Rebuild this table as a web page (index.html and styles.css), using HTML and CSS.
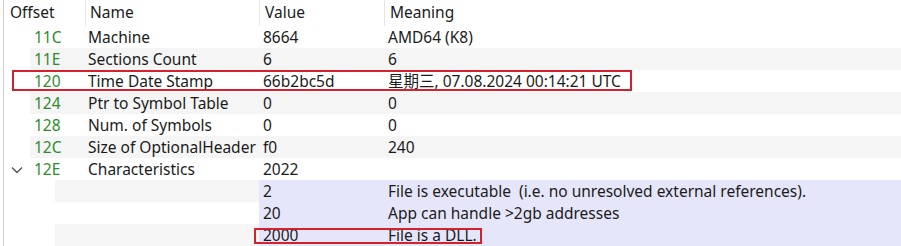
FILE: index.html
```html
<!DOCTYPE html>
<html>
<head>
<meta charset="utf-8">
<link rel="stylesheet" href="styles.css">
</head>
<body>
<div class="tree">
  <div class="head">
    <div class="hcell h-off">Offset</div>
    <div class="hcell h-name">Name</div>
    <div class="hcell h-val">Value</div>
    <div class="hcell h-mean">Meaning</div>
  </div>
  <div class="row l1"><div class="gutter"></div><div class="cells"><span class="off">11C</span><span>Machine</span><span>8664</span><span>AMD64 (K8)</span></div></div>
  <div class="row l1 alt"><div class="gutter"></div><div class="cells"><span class="off">11E</span><span>Sections Count</span><span>6</span><span>6</span></div></div>
  <div class="row l1"><div class="gutter"></div><div class="cells"><span class="off">120</span><span>Time Date Stamp</span><span>66b2bc5d</span><span>星期三, 07.08.2024 00:14:21 UTC</span></div></div>
  <div class="row l1 alt"><div class="gutter"></div><div class="cells"><span class="off">124</span><span>Ptr to Symbol Table</span><span>0</span><span>0</span></div></div>
  <div class="row l1"><div class="gutter"></div><div class="cells"><span class="off">128</span><span>Num. of Symbols</span><span>0</span><span>0</span></div></div>
  <div class="row l1 alt"><div class="gutter"></div><div class="cells"><span class="off">12C</span><span>Size of OptionalHeader</span><span>f0</span><span>240</span></div></div>
  <div class="row l1"><div class="gutter"><svg class="chev" width="12" height="8" viewBox="0 0 12 8"><polyline points="1,1.5 6,6.5 11,1.5" fill="none" stroke="#555" stroke-width="1.4"/></svg></div><div class="cells"><span class="off">12E</span><span>Characteristics</span><span>2022</span><span></span></div></div>
  <div class="row l2 alt"><div class="gutter"></div><div class="cells"><span class="off"></span><span></span><span class="flag">2</span><span class="flag">File is executable  (i.e. no unresolved external references).</span></div></div>
  <div class="row l2"><div class="gutter"></div><div class="cells"><span class="off"></span><span></span><span class="flag">20</span><span class="flag">App can handle &gt;2gb addresses</span></div></div>
  <div class="row l2 alt"><div class="gutter"></div><div class="cells"><span class="off"></span><span></span><span class="flag">2000</span><span class="flag">File is a DLL.</span></div></div>
  <div class="mark mark-1"></div>
  <div class="mark mark-2"></div>
</div>
</body>
</html>
```
FILE: styles.css
```css
html, body {
  margin: 0;
  padding: 0;
  background: #ffffff;
}
body {
  width: 901px;
  height: 246px;
  overflow: hidden;
  font-family: "Noto Sans", "Noto Sans CJK SC", sans-serif;
  font-size: 15.5px;
  color: #1b1b1b;
}
.tree {
  margin-left: 3px;
  border-left: 1px solid #cfcfcf;
  height: 246px;
  position: relative;
}
.head {
  display: flex;
  height: 26px;
  line-height: 24px;
}
.hcell {
  border-right: 1px solid #e6e6e6;
  white-space: nowrap;
}
.h-off { width: 75px; padding-left: 6px; }
.h-name { width: 169px; padding-left: 4px; }
.h-val { width: 119px; padding-left: 5px; }
.h-mean { flex: 1; padding-left: 5px; border-right: none; }
.row {
  display: flex;
  height: 22px;
  line-height: 22px;
}
.row .gutter {
  flex: none;
  display: flex;
  align-items: center;
  justify-content: flex-start;
}
.l1 .gutter { width: 26px; }
.l2 .gutter { width: 51px; }
.cells {
  flex: 1;
  display: grid;
  white-space: pre;
}
.l1 .cells { grid-template-columns: 54px 175px 125px 1fr; }
.l2 .cells { grid-template-columns: 29px 175px 125px 1fr; }
.cells > span {
  padding-left: 4px;
  overflow: hidden;
}
.alt .cells { background: #f5f5f5; }
.off { color: #2e8b2e; }
.flag { background: #e6e6fa; }
.chev { margin-left: 7px; margin-top: 1px; }
.mark {
  position: absolute;
  border: 2px solid #d3222e;
  box-sizing: border-box;
}
.mark-1 { left: 8px; top: 70px; width: 620px; height: 21px; }
.mark-2 { left: 250px; top: 228px; width: 228px; height: 16px; }
```
